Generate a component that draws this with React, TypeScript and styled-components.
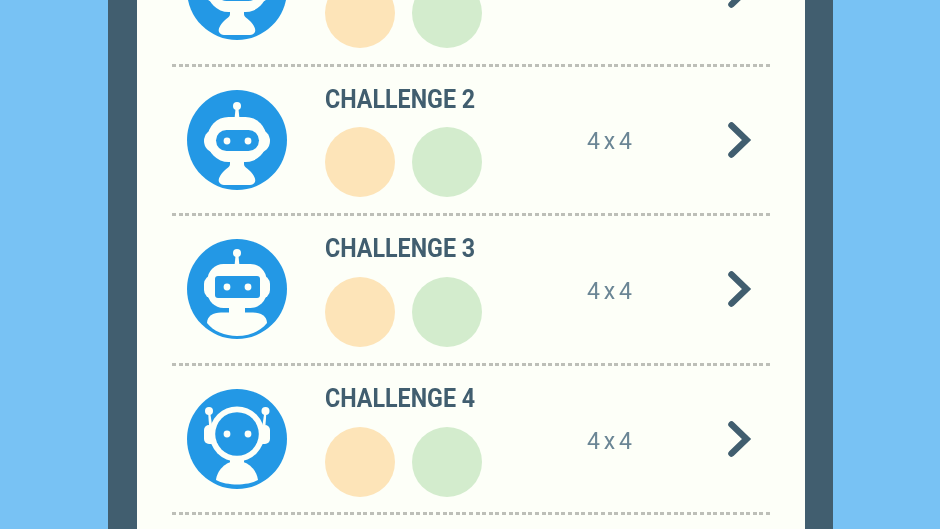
import React from "react";
import styled, { createGlobalStyle } from "styled-components";

const Global = createGlobalStyle`
  html, body { margin: 0; padding: 0; height: 100%; overflow: hidden; background: #78c2f4; }
  #root { height: 100%; }
`;

const Page = styled.div`
  width: 940px;
  height: 529px;
  overflow: hidden;
  display: flex;
  justify-content: center;
  padding-left: 1px;
  box-sizing: border-box;
  background: #78c2f4;
  filter: blur(0.45px);
`;

const Frame = styled.div`
  width: 725px;
  height: 529px;
  box-sizing: border-box;
  padding: 0 28px 0 29px;
  margin-left: -1px;
  background: #415e6f;
`;

const Sheet = styled.div`
  height: 529px;
  overflow: hidden;
  background: #fdfff8;
  padding: 0 35px;
`;

const List = styled.div`
  margin-top: -83px;
  display: flex;
  flex-direction: column;
`;

const Row = styled.div`
  height: 149.6px;
  box-sizing: border-box;
  padding: 0 0 3px 15px;
  display: grid;
  grid-template-columns: 100px 38px 262px 140px 25px;
  align-items: center;
  background-image: repeating-linear-gradient(to right, #bdbfb8 0 4px, transparent 4px 6.6px);
  background-size: 598px 3px;
  background-position: left bottom;
  background-repeat: no-repeat;
`;

const Avatar = styled.svg`
  width: 100px;
  height: 100px;
  display: block;
  grid-column: 1;
`;

const Info = styled.div`
  grid-column: 3;
  display: flex;
  flex-direction: column;
  gap: 13.5px;
  margin-top: 3.5px;
`;

const Title = styled.div`
  font-family: "Roboto", "Liberation Sans", sans-serif;
  font-weight: 700;
  font-size: 25px;
  line-height: 28px;
  color: #415e6f;
  white-space: nowrap;
  transform: scaleX(0.93);
  transform-origin: left center;
`;

const Dots = styled.div`
  display: flex;
  gap: 17px;
`;

const Dot = styled.div<{ $color: string }>`
  width: 70px;
  height: 70px;
  border-radius: 50%;
  background: ${(p) => p.$color};
`;

const Size = styled.div`
  grid-column: 4;
  font-family: "Roboto", "Liberation Sans", sans-serif;
  font-size: 24px;
  font-weight: 400;
  color: #6b8695;
  word-spacing: -2px;
  white-space: nowrap;
  margin-top: 3px;
  transform: scaleX(0.96);
  transform-origin: left center;
`;

const Chevron = styled.svg`
  grid-column: 5;
  width: 25px;
  height: 38px;
  display: block;
`;

const BLUE = "#2398e5";
const W = "#fdfff8";

const Eyes = ({ y }: { y: number }) => (
  <>
    <circle cx="40" cy={y} r="3.4" fill={W} />
    <circle cx="61" cy={y} r="3.4" fill={W} />
  </>
);

const RobotA = () => (
  <>
    <circle cx="50" cy="16" r="4" fill={W} />
    <path d="M48.8 16 h2.4 l1.2 12 h-4.8z" fill={W} />
    <rect x="17" y="39" width="66" height="24" rx="12" fill={W} />
    <rect x="20.5" y="27" width="59" height="45" rx="21" fill={W} />
    <path d="M43 70 h14 v4 c0 3 3 4 6 7 c4 4 6 8 5 11 c-1 2 -3 3 -5 3 h-26 c-2 0 -4 -1 -5 -3 c-1 -3 1 -7 5 -11 c3 -3 6 -4 6 -7z" fill={W} />
    <rect x="29" y="40" width="43" height="21" rx="10.5" fill={BLUE} />
    <Eyes y={51} />
  </>
);

const RobotB = () => (
  <>
    <circle cx="50" cy="14" r="4" fill={W} />
    <path d="M48.8 14 h2.4 l1.2 12 h-4.8z" fill={W} />
    <rect x="17" y="36" width="66" height="24" rx="9" fill={W} />
    <rect x="20.5" y="25" width="59" height="44" rx="16" fill={W} />
    <rect x="42" y="67" width="16" height="10" fill={W} />
    <path d="M34 73.5 c-8 0 -14 4 -14 10.5 c6 8 18 13 30 13 c12 0 24 -5 30 -13 c0 -6.5 -6 -10.5 -14 -10.5z" fill={W} />
    <rect x="28" y="37" width="45" height="22" rx="3" fill={BLUE} />
    <Eyes y={48} />
  </>
);

const RobotC = () => (
  <>
    <circle cx="22" cy="22" r="4" fill={W} />
    <circle cx="78.5" cy="22" r="4" fill={W} />
    <path d="M21 22 h2 l2 14 h-3z" fill={W} />
    <path d="M77.5 22 h2 l-1 14 h-3z" fill={W} />
    <rect x="17" y="36" width="66" height="19" rx="5" fill={W} />
    <circle cx="50" cy="45" r="27.5" fill={W} />
    <circle cx="50" cy="45" r="21.8" fill={BLUE} />
    <rect x="43" y="70" width="14" height="6" fill={W} />
    <path d="M50 72 c12 0 20 10 21 19 c-5 3 -14 4.5 -21 4.5 c-7 0 -16 -1.5 -21 -4.5 c1 -9 9 -19 21 -19z" fill={W} />
    <Eyes y={45} />
  </>
);

const Robot = ({ kind }: { kind: "a" | "b" | "c" }) => (
  <Avatar viewBox="0 0 100 100">
    <circle cx="50" cy="50" r="50" fill={BLUE} />
    {kind === "a" && <RobotA />}
    {kind === "b" && <RobotB />}
    {kind === "c" && <RobotC />}
  </Avatar>
);

const rows = [
  { title: "CHALLENGE 1", size: "3 x 3", kind: "a" as const },
  { title: "CHALLENGE 2", size: "4 x 4", kind: "a" as const },
  { title: "CHALLENGE 3", size: "4 x 4", kind: "b" as const },
  { title: "CHALLENGE 4", size: "4 x 4", kind: "c" as const },
  { title: "CHALLENGE 5", size: "4 x 4", kind: "a" as const },
];

export default function App() {
  return (
    <Page>
      <Global />
      <Frame>
        <Sheet>
          <List>
            {rows.map((r) => (
              <Row key={r.title}>
                <Robot kind={r.kind} />
                <Info>
                  <Title>{r.title}</Title>
                  <Dots>
                    <Dot $color="#fde4b8" />
                    <Dot $color="#d3eccd" />
                  </Dots>
                </Info>
                <Size>{r.size}</Size>
                <Chevron viewBox="0 0 25 38">
                  <path d="M4.5 4.5 L19.5 19 L4.5 33.5" fill="none" stroke="#415e6f" strokeWidth="6.5" strokeLinecap="round" strokeLinejoin="miter" />
                </Chevron>
              </Row>
            ))}
          </List>
        </Sheet>
      </Frame>
    </Page>
  );
}
